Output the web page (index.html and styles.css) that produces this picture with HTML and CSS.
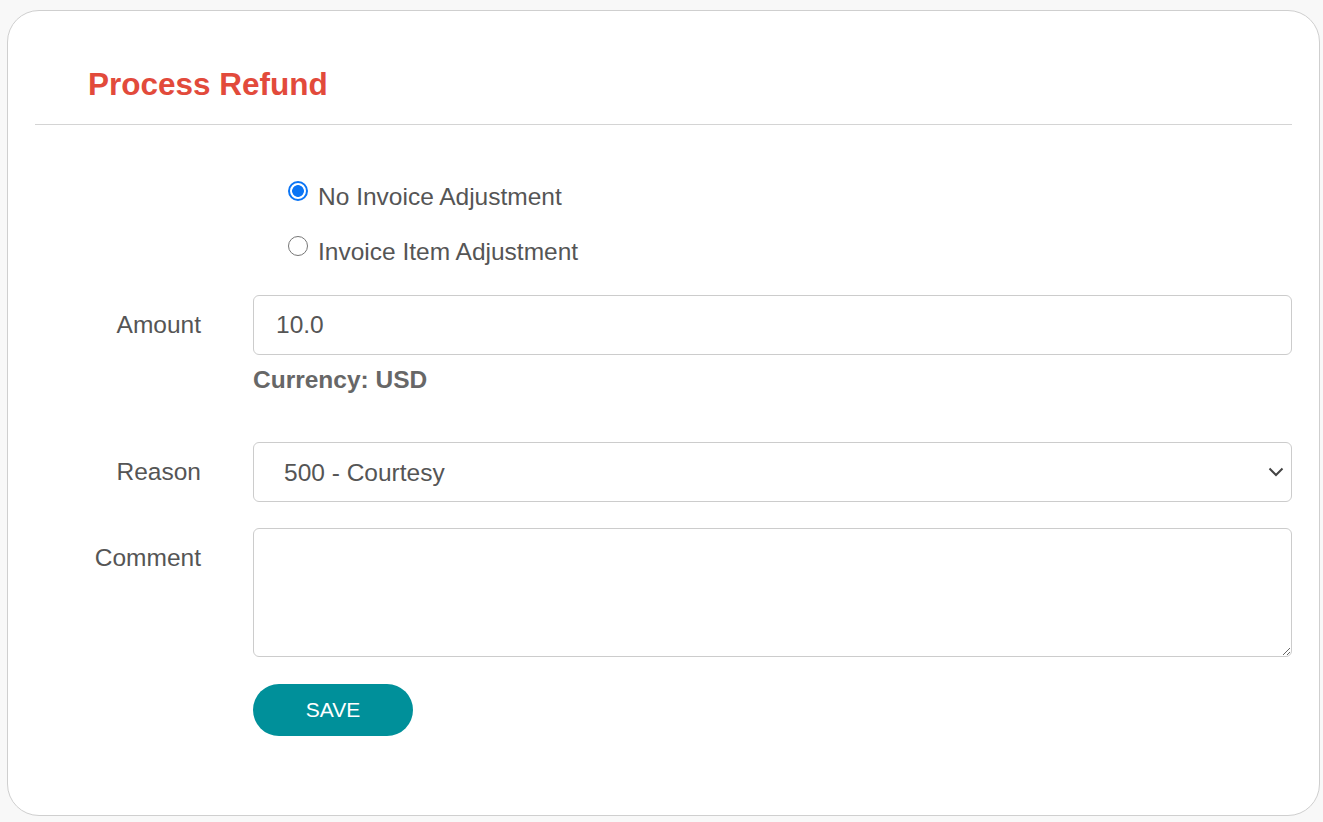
FILE: index.html
```html
<!DOCTYPE html>
<html lang="en">
<head>
<meta charset="utf-8">
<title>Process Refund</title>
<link rel="stylesheet" href="styles.css">
</head>
<body>
<div class="card">
  <div class="card-header">
    <h2 class="title">Process Refund</h2>
  </div>
  <form class="form">
    <div class="row radios">
      <div class="label-col"></div>
      <div class="control-col radio-list">
        <label class="radio-row"><input type="radio" name="adj" class="radio" checked> No Invoice Adjustment</label>
        <label class="radio-row"><input type="radio" name="adj" class="radio"> Invoice Item Adjustment</label>
      </div>
    </div>
    <div class="row row-amount">
      <label class="label-col field-label">Amount</label>
      <div class="control-col">
        <input class="text-input" type="text" value="10.0">
        <div class="currency">Currency: USD</div>
      </div>
    </div>
    <div class="row row-reason">
      <label class="label-col field-label">Reason</label>
      <div class="control-col select-wrap">
        <select class="select">
          <option>500 - Courtesy</option>
        </select>
        <svg class="chevron" width="16" height="10" viewBox="0 0 16 10"><path d="M1.5 1.5 L8 8 L14.5 1.5" fill="none" stroke="#444" stroke-width="2"/></svg>
      </div>
    </div>
    <div class="row row-comment">
      <label class="label-col field-label">Comment</label>
      <div class="control-col">
        <textarea class="textarea"></textarea>
      </div>
    </div>
    <div class="row row-save">
      <div class="label-col"></div>
      <div class="control-col">
        <button type="button" class="save-btn">SAVE</button>
      </div>
    </div>
  </form>
</div>
</body>
</html>
```
FILE: styles.css
```css
* { box-sizing: border-box; }
html, body { margin: 0; }
body {
  background: #f8f8f8;
  padding: 10px 3px 6px 7px;
  height: 822px;
  font-family: "Liberation Sans", Arial, sans-serif;
  color: #555;
}
.card {
  background: #fff;
  border: 1px solid #cfcfcf;
  border-radius: 32px;
  height: 806px;
}
.card-header {
  margin: 0 27px;
  padding: 55px 0 22px 53px;
  border-bottom: 1px solid #d4d4d4;
}
.title {
  margin: 0;
  font-size: 31.5px;
  line-height: 36px;
  font-weight: bold;
  color: #e24a3b;
}
.form {
  margin: 0 27px;
  padding-top: 58px;
}
.row {
  display: flex;
  column-gap: 52px;
}
.label-col {
  width: 166px;
  flex: none;
  text-align: right;
}
.control-col {
  flex: 1;
  min-width: 0;
}
.field-label {
  font-size: 24.5px;
  line-height: 28px;
  padding-top: 16px;
  color: #555;
}
.radio-list {
  display: flex;
  flex-direction: column;
  row-gap: 27px;
  padding-left: 35px;
}
.radio-row {
  display: flex;
  align-items: flex-start;
  font-size: 24.5px;
  line-height: 28px;
  color: #555;
}
.radio {
  appearance: none;
  -webkit-appearance: none;
  width: 20px;
  height: 20px;
  margin: -2px 10px 0 0;
  border-radius: 50%;
  border: 1.5px solid #767676;
  background: #fff;
  flex: none;
}
.radio:checked {
  border: 2px solid #0b75f5;
  background: radial-gradient(circle, #0b75f5 0 5.5px, #fff 6.2px);
}
.row-amount { margin-top: 29px; }
.text-input {
  display: block;
  width: 100%;
  height: 60px;
  border: 1px solid #cccccc;
  border-radius: 6px;
  padding: 0 22px;
  font-family: inherit;
  font-size: 24.5px;
  color: #555;
  background: #fff;
  outline: none;
}
.currency {
  margin-top: 11px;
  font-size: 24.5px;
  line-height: 28px;
  font-weight: bold;
  color: #676767;
}
.row-reason { margin-top: 48px; }
.select-wrap { position: relative; }
.select {
  appearance: none;
  -webkit-appearance: none;
  display: block;
  width: 100%;
  height: 60px;
  border: 1px solid #cccccc;
  border-radius: 6px;
  padding: 0 50px 0 30px;
  font-family: inherit;
  font-size: 24.5px;
  color: #555;
  background: #fff;
  outline: none;
}
.chevron {
  position: absolute;
  right: 8px;
  top: 25px;
  pointer-events: none;
}
.row-comment { margin-top: 26px; }
.textarea {
  display: block;
  width: 100%;
  height: 129px;
  border: 1px solid #cccccc;
  border-radius: 6px;
  font-family: inherit;
  font-size: 24.5px;
  color: #555;
  resize: vertical;
  outline: none;
}
.row-save { margin-top: 27px; }
.save-btn {
  width: 160px;
  height: 52px;
  border: none;
  border-radius: 26px;
  background: #00909a;
  color: #fff;
  font-family: inherit;
  font-size: 21px;
  cursor: pointer;
}
```
